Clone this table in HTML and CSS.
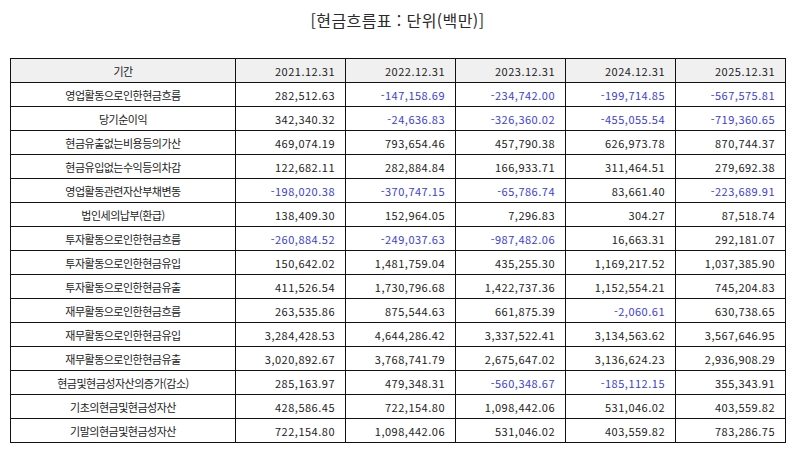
FILE: index.html
```html
<!DOCTYPE html>
<html lang="ko">
<head>
<meta charset="utf-8">
<link rel="stylesheet" href="styles.css">
</head>
<body>
<div class="page">
  <div class="title">[현금흐름표 : 단위(백만)]</div>
  <table class="cf">
    <colgroup>
      <col class="c-label"><col class="c-num"><col class="c-num"><col class="c-num"><col class="c-num"><col class="c-num">
    </colgroup>
    <thead>
      <tr><th class="lbl">기간</th><th>2021.12.31</th><th>2022.12.31</th><th>2023.12.31</th><th>2024.12.31</th><th>2025.12.31</th></tr>
    </thead>
    <tbody>
      <tr><td class="lbl">영업활동으로인한현금흐름</td><td>282,512.63</td><td class="neg">-147,158.69</td><td class="neg">-234,742.00</td><td class="neg">-199,714.85</td><td class="neg">-567,575.81</td></tr>
      <tr><td class="lbl">당기순이익</td><td>342,340.32</td><td class="neg">-24,636.83</td><td class="neg">-326,360.02</td><td class="neg">-455,055.54</td><td class="neg">-719,360.65</td></tr>
      <tr><td class="lbl">현금유출없는비용등의가산</td><td>469,074.19</td><td>793,654.46</td><td>457,790.38</td><td>626,973.78</td><td>870,744.37</td></tr>
      <tr><td class="lbl">현금유입없는수익등의차감</td><td>122,682.11</td><td>282,884.84</td><td>166,933.71</td><td>311,464.51</td><td>279,692.38</td></tr>
      <tr><td class="lbl">영업활동관련자산부채변동</td><td class="neg">-198,020.38</td><td class="neg">-370,747.15</td><td class="neg">-65,786.74</td><td>83,661.40</td><td class="neg">-223,689.91</td></tr>
      <tr><td class="lbl">법인세의납부(환급)</td><td>138,409.30</td><td>152,964.05</td><td>7,296.83</td><td>304.27</td><td>87,518.74</td></tr>
      <tr><td class="lbl">투자활동으로인한현금흐름</td><td class="neg">-260,884.52</td><td class="neg">-249,037.63</td><td class="neg">-987,482.06</td><td>16,663.31</td><td>292,181.07</td></tr>
      <tr><td class="lbl">투자활동으로인한현금유입</td><td>150,642.02</td><td>1,481,759.04</td><td>435,255.30</td><td>1,169,217.52</td><td>1,037,385.90</td></tr>
      <tr><td class="lbl">투자활동으로인한현금유출</td><td>411,526.54</td><td>1,730,796.68</td><td>1,422,737.36</td><td>1,152,554.21</td><td>745,204.83</td></tr>
      <tr><td class="lbl">재무활동으로인한현금흐름</td><td>263,535.86</td><td>875,544.63</td><td>661,875.39</td><td class="neg">-2,060.61</td><td>630,738.65</td></tr>
      <tr><td class="lbl">재무활동으로인한현금유입</td><td>3,284,428.53</td><td>4,644,286.42</td><td>3,337,522.41</td><td>3,134,563.62</td><td>3,567,646.95</td></tr>
      <tr><td class="lbl">재무활동으로인한현금유출</td><td>3,020,892.67</td><td>3,768,741.79</td><td>2,675,647.02</td><td>3,136,624.23</td><td>2,936,908.29</td></tr>
      <tr><td class="lbl">현금및현금성자산의증가(감소)</td><td>285,163.97</td><td>479,348.31</td><td class="neg">-560,348.67</td><td class="neg">-185,112.15</td><td>355,343.91</td></tr>
      <tr><td class="lbl">기초의현금및현금성자산</td><td>428,586.45</td><td>722,154.80</td><td>1,098,442.06</td><td>531,046.02</td><td>403,559.82</td></tr>
      <tr><td class="lbl">기말의현금및현금성자산</td><td>722,154.80</td><td>1,098,442.06</td><td>531,046.02</td><td>403,559.82</td><td>783,286.75</td></tr>
    </tbody>
  </table>
</div>
</body>
</html>
```
FILE: styles.css
```css
html, body {
  margin: 0;
  padding: 0;
  background: #ffffff;
}
.page {
  padding: 0 9px 0 10px;
  font-family: "Noto Sans CJK KR", "Noto Sans", sans-serif;
  color: #222222;
}
.title {
  padding-top: 5px;
  height: 30px;
  line-height: 30px;
  font-size: 16px;
  letter-spacing: 0.4px;
  font-weight: 400;
  text-align: center;
  color: #2a2a2a;
  margin-bottom: 23px;
}
.cf {
  width: 776px;
  border-collapse: collapse;
  table-layout: fixed;
  font-size: 11px;
}
.c-label { width: 225px; }
.c-num { width: 110px; }
.cf th, .cf td {
  border: 1px solid #111111;
  height: 23px;
  padding: 0 10px 0 4px;
  text-align: right;
  font-weight: normal;
  white-space: nowrap;
  line-height: 14px;
  letter-spacing: 0.5px;
}
.cf th {
  background: #f0f0f0;
}
.cf .lbl {
  text-align: center;
  padding: 0 4px;
  letter-spacing: -0.5px;
}
.cf .neg {
  color: #3d3dd8;
}
```
